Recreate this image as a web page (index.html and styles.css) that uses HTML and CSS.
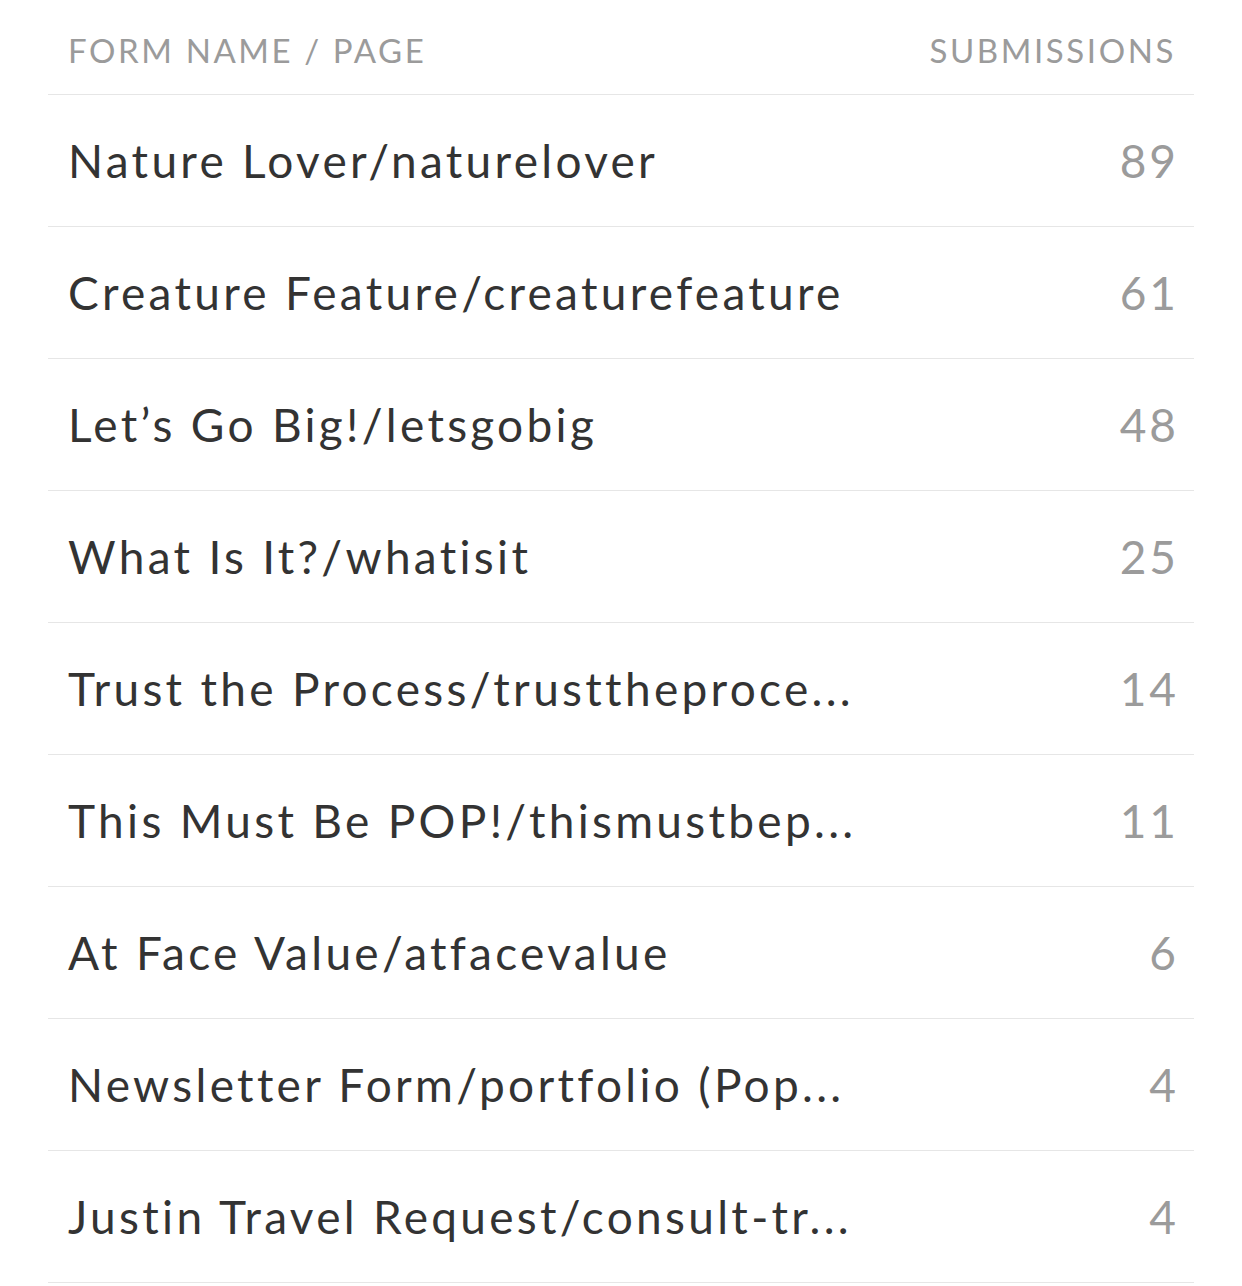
FILE: index.html
```html
<!DOCTYPE html>
<html>
<head>
<meta charset="utf-8">
<link rel="stylesheet" href="styles.css">
</head>
<body>
<div class="table">
  <div class="head">
    <span class="head-name">FORM NAME / PAGE</span>
    <span class="head-count">SUBMISSIONS</span>
  </div>
  <div class="row"><span class="name">Nature Lover/naturelover</span><span class="count">89</span></div>
  <div class="row"><span class="name">Creature Feature/creaturefeature</span><span class="count">61</span></div>
  <div class="row"><span class="name">Let’s Go Big!/letsgobig</span><span class="count">48</span></div>
  <div class="row"><span class="name">What Is It?/whatisit</span><span class="count">25</span></div>
  <div class="row"><span class="name">Trust the Process/trusttheproce...</span><span class="count">14</span></div>
  <div class="row"><span class="name">This Must Be POP!/thismustbep...</span><span class="count">11</span></div>
  <div class="row"><span class="name">At Face Value/atfacevalue</span><span class="count">6</span></div>
  <div class="row"><span class="name">Newsletter Form/portfolio (Pop...</span><span class="count">4</span></div>
  <div class="row"><span class="name">Justin Travel Request/consult-tr...</span><span class="count">4</span></div>
</div>
</body>
</html>
```
FILE: styles.css
```css
html, body {
  margin: 0;
  padding: 0;
  background: #ffffff;
}
body {
  font-family: "Lato", "Noto Sans", sans-serif;
}
.table {
  margin: 0 48px;
}
.head {
  height: 95px;
  box-sizing: border-box;
  padding: 6px 18px 0 20px;
  display: flex;
  align-items: center;
  justify-content: space-between;
  border-bottom: 1px solid #e6e6e6;
  color: #9b9b9b;
  font-size: 33px;
  letter-spacing: 2.6px;
}
.row {
  height: 132px;
  box-sizing: border-box;
  padding: 0 15px 0 20px;
  display: flex;
  align-items: center;
  justify-content: space-between;
  border-bottom: 1px solid #e6e6e6;
  font-size: 46px;
}
.name {
  color: #333333;
  white-space: nowrap;
  letter-spacing: 3.3px;
}
.count {
  color: #9b9b9b;
  letter-spacing: 3px;
}
```
